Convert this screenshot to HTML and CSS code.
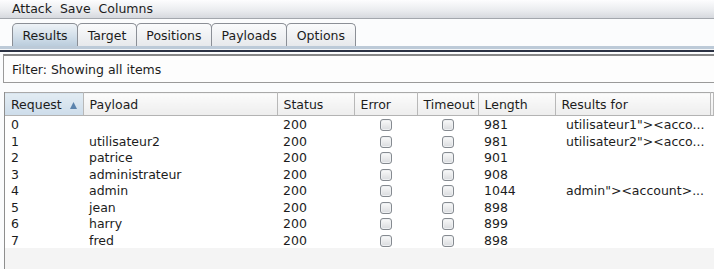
FILE: index.html
```html
<!DOCTYPE html>
<html lang="en">
<head>
    <meta charset="UTF-8">
    <title>Intruder attack</title>
    <link rel="stylesheet" href="styles.css">
</head>

<body>

<!-- Menu bar -->
<div class="menubar">
    <span>Attack</span>
    <span>Save</span>
    <span>Columns</span>
</div>

<!-- Tabs -->
<div class="tabs">
    <div class="tab active">Results</div>
    <div class="tab">Target</div>
    <div class="tab">Positions</div>
    <div class="tab">Payloads</div>
    <div class="tab">Options</div>
</div>
<div class="tabline"></div>

<div class="filter">Filter: Showing all items</div>

<!-- Results table -->
<div class="grid">
    <table>
        <colgroup>
            <col style="width:78px">
            <col style="width:194px">
            <col style="width:77px">
            <col style="width:63px">
            <col style="width:61px">
            <col style="width:77px">
            <col style="width:155px">
            <col>
        </colgroup>
        <thead>
            <tr>
                <th class="sorted">Request
                    <svg class="arrow" width="7" height="7" viewBox="0 0 7 7"><polygon points="0,7 3.5,0 7,7" fill="#5b83ad"/></svg>
                </th>
                <th>Payload</th>
                <th>Status</th>
                <th>Error</th>
                <th>Timeout</th>
                <th>Length</th>
                <th>Results for</th>
                <th></th>
            </tr>
        </thead>
        <tbody id="rows"></tbody>
    </table>
</div>

<script>
    // Attack results
    const results = [
        [0, "", 200, 981, 'utilisateur1"><acco...'],
        [1, "utilisateur2", 200, 981, 'utilisateur2"><acco...'],
        [2, "patrice", 200, 901, ""],
        [3, "administrateur", 200, 908, ""],
        [4, "admin", 200, 1044, 'admin"><account>...'],
        [5, "jean", 200, 898, ""],
        [6, "harry", 200, 899, ""],
        [7, "fred", 200, 898, ""]
    ];

    const tbody = document.getElementById("rows");
    results.forEach(r => {
        const tr = document.createElement("tr");
        tr.innerHTML =
            "<td>" + r[0] + "</td>" +
            "<td>" + r[1] + "</td>" +
            "<td>" + r[2] + "</td>" +
            "<td class='center'><span class='check'></span></td>" +
            "<td class='center'><span class='check'></span></td>" +
            "<td>" + r[3] + "</td>" +
            "<td class='grep'></td>" +
            "<td></td>";
        tr.querySelector(".grep").textContent = r[4];
        tbody.appendChild(tr);
    });
</script>

</body>
</html>
```

FILE: styles.css
```css
body {
    font-family: "DejaVu Sans", sans-serif;
    font-size: 12.5px;
    color: #1c1c1c;
    background: #fbfcfd;
    margin: 0;
    padding: 0;
    height: 269px;
    overflow: hidden;
    display: flex;
    flex-direction: column;
}
.menubar {
    height: 18px;
    line-height: 17px;
    padding-left: 12px;
    background: linear-gradient(#fdfdfe, #e9ebee 60%, #d6d9de);
    border-bottom: 1px solid #a3a7ad;
    display: flex;
    gap: 8px;
}
.tabs {
    display: flex;
    padding: 4px 0 0 12px;
    height: 23px;
}
.tab {
    height: 23px;
    line-height: 24px;
    padding: 0 9.5px;
    border: 1px solid #8b8f96;
    border-bottom: none;
    border-radius: 5px 5px 0 0;
    background: linear-gradient(#fafbfc, #e6e8eb);
    margin-right: -1px;
}
.tab.active {
    background: linear-gradient(#eef3f7, #c9d8e5 70%, #b9cbdb);
}
.tabline {
    height: 3px;
    background: #bccad8;
    border-bottom: 1px solid #f4f6f8;
    box-shadow: 0 2px 0 #2b3243;
    margin-bottom: 4px;
}
.filter {
    margin-left: 3px;
    height: 26px;
    line-height: 27px;
    padding-left: 8px;
    background: #fdfdfd;
    border: 1px solid #9a9a9a;
    border-top: 2px solid #888;
    border-right: none;
}
.grid {
    flex: 1;
    margin: 9px 0 0 4px;
    border-left: 1px solid #8e8e8e;
    background: #f4f4f4;
}
table {
    width: 100%;
    table-layout: fixed;
    border-collapse: collapse;
    background: #fff;
}
th {
    height: 22px;
    padding: 0 0 0 6px;
    text-align: left;
    font-weight: normal;
    background: linear-gradient(#fcfcfc, #ededed);
    border-top: 1px solid #a9a9a9;
    border-bottom: 1px solid #b3b3b3;
    border-right: 1px solid #b8b8b8;
    white-space: nowrap;
}
th.sorted {
    background: linear-gradient(#e2ecf3, #cddcea);
}
.arrow {
    margin-left: 4px;
    vertical-align: 0;
}
td {
    height: 15.5px;
    padding: 1px 0 0 6px;
    line-height: 15.5px;
    white-space: nowrap;
    overflow: hidden;
}
td.grep {
    padding-left: 11px;
}
td.center {
    padding: 1px 0 0;
    text-align: center;
}
.check {
    display: inline-block;
    width: 10px;
    height: 10px;
    border: 1px solid #858a90;
    border-radius: 3px;
    background: linear-gradient(#fafafa, #d9dbde);
    box-shadow: inset 0 0 0 1px #eef0f2;
    vertical-align: -2px;
}
```
